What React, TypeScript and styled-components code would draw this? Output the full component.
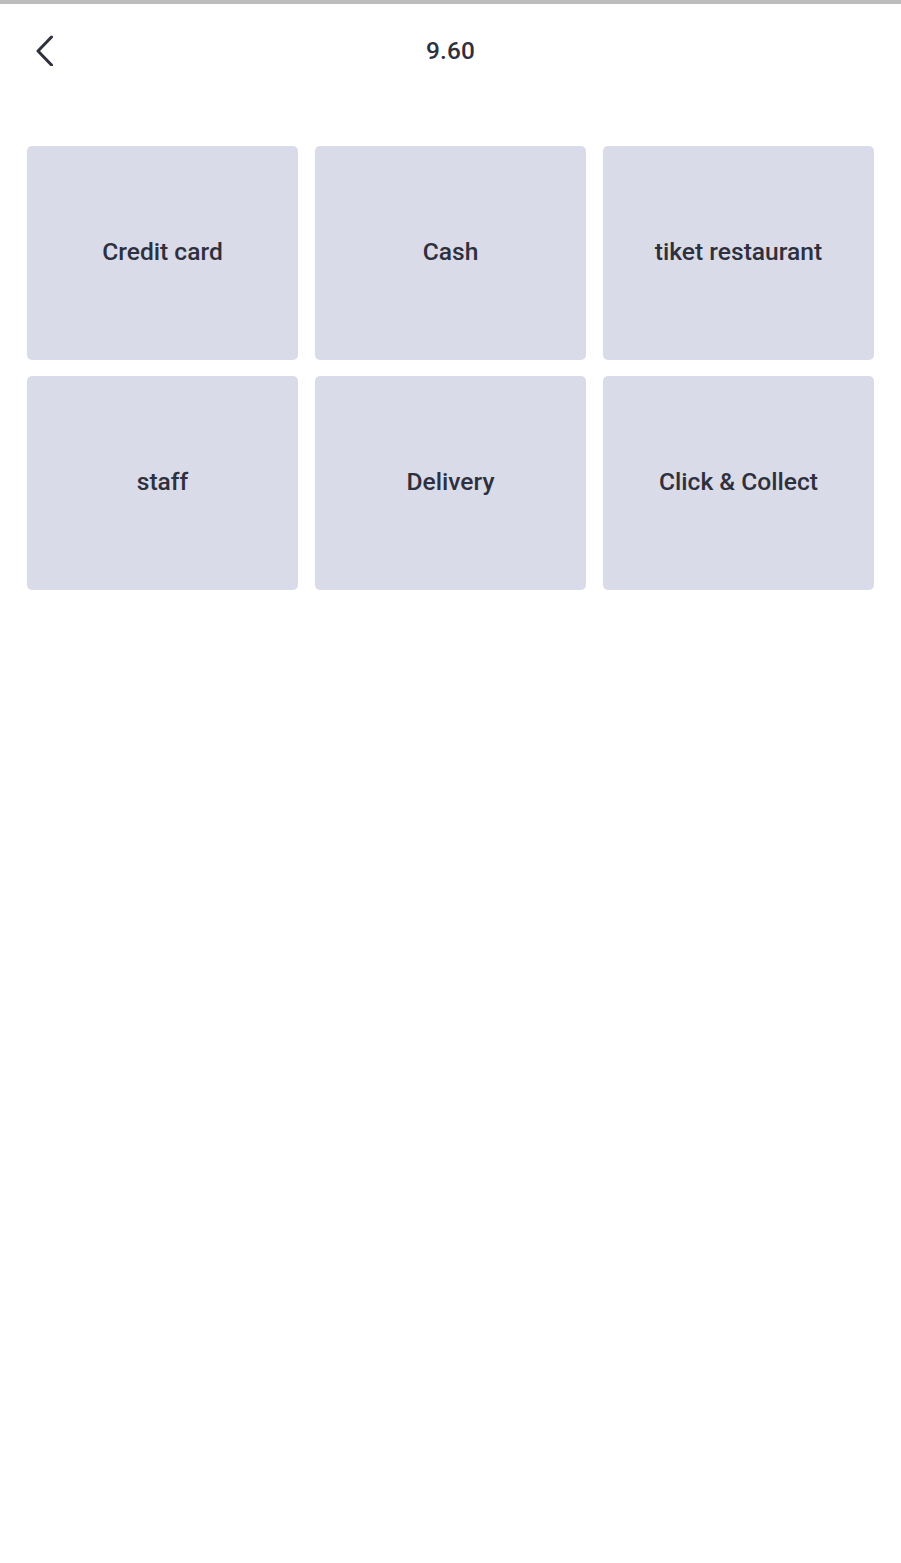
import React from "react";
import styled, { createGlobalStyle } from "styled-components";

const GlobalStyle = createGlobalStyle`
  html, body {
    margin: 0;
    padding: 0;
    background: #ffffff;
    font-family: Roboto, "Liberation Sans", Arial, sans-serif;
  }
  * { box-sizing: border-box; }
`;

const Page = styled.div`
  min-height: 1563px;
  background: #ffffff;
  border-top: 4px solid #bdbdbd;
`;

const Header = styled.header`
  position: relative;
  height: 92px;
  display: flex;
  align-items: center;
  justify-content: center;
`;

const BackButton = styled.button`
  position: absolute;
  left: 27px;
  top: 24px;
  width: 36px;
  height: 44px;
  padding: 0;
  border: none;
  background: transparent;
  display: flex;
  align-items: center;
  justify-content: center;
  cursor: pointer;
`;

const Title = styled.h1`
  margin: 0;
  margin-top: 1px;
  font-size: 24.4px;
  font-weight: 500;
  color: #2e303d;
  letter-spacing: 0.2px;
`;

const Grid = styled.div`
  display: grid;
  grid-template-columns: repeat(3, 1fr);
  column-gap: 17px;
  row-gap: 16px;
  padding: 50px 27px 0;
`;

const Tile = styled.button`
  height: 214px;
  border: none;
  border-radius: 5px;
  background: #dadbe8;
  color: #2e303d;
  font-family: Roboto, "Liberation Sans", Arial, sans-serif;
  font-size: 24.6px;
  font-weight: 500;
  display: flex;
  align-items: center;
  justify-content: center;
  cursor: pointer;
  padding: 0 0 3px;
`;

const methods = [
  "Credit card",
  "Cash",
  "tiket restaurant",
  "staff",
  "Delivery",
  "Click & Collect",
];

export default function App() {
  return (
    <>
      <GlobalStyle />
      <Page>
        <Header>
          <BackButton aria-label="Back">
            <svg width="22" height="32" viewBox="0 0 22 32" fill="none">
              <polyline
                points="17.5,3 4,17 17.5,31"
                stroke="#2e303d"
                strokeWidth="3"
                strokeLinecap="round"
                strokeLinejoin="round"
              />
            </svg>
          </BackButton>
          <Title>9.60</Title>
        </Header>
        <Grid>
          {methods.map((m) => (
            <Tile key={m}>{m}</Tile>
          ))}
        </Grid>
      </Page>
    </>
  );
}
